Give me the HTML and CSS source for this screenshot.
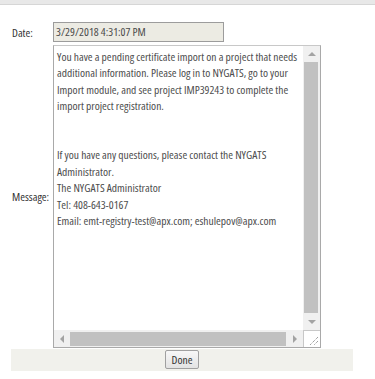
FILE: index.html
```html
<!DOCTYPE html>
<html lang="en">
<head>
    <meta charset="UTF-8">
    <meta name="viewport" content="width=device-width, initial-scale=1.0">
    <title>Import Message</title>
    <link rel="stylesheet" href="styles.css">
</head>
<body>
    <div class="topbar"></div>
    <div class="dialog">
        <div class="form-grid">
            <label class="field-label">Date:</label>
            <div class="date-box">3/29/2018 4:31:07 PM</div>

            <label class="field-label">Message:</label>
            <div class="message-box">
                <div class="message-text">You have a pending certificate import on a project that needs
additional information. Please log in to NYGATS, go to your
Import module, and see project IMP39243 to complete the
import project registration.


If you have any questions, please contact the NYGATS
Administrator.
The NYGATS Administrator
Tel: 408-643-0167
Email: emt-registry-test@apx.com; eshulepov@apx.com</div>
                <div class="vscroll">
                    <div class="arrow-btn"><span class="tri tri-up"></span></div>
                    <div class="vthumb"></div>
                    <div class="arrow-btn"><span class="tri tri-down"></span></div>
                </div>
                <div class="hscroll">
                    <div class="arrow-btn"><span class="tri tri-left"></span></div>
                    <div class="hthumb"></div>
                    <div class="arrow-btn"><span class="tri tri-right"></span></div>
                </div>
                <div class="corner">
                    <svg width="16" height="16" viewBox="0 0 16 16">
                        <path d="M14 6 L6 14 M14 10 L10 14" stroke="#777" stroke-width="1" stroke-dasharray="1 1"/>
                    </svg>
                </div>
            </div>
        </div>
        <div class="footer">
            <button type="button" class="done-btn">Done</button>
        </div>
    </div>
</body>
</html>
```
FILE: styles.css
```css
body {
    margin: 0;
    font-family: "Open Sans", sans-serif;
    font-stretch: 75%;
    font-size: 11.5px;
    color: #333;
    background: #fff;
}
.topbar {
    height: 4px;
    background: #e8e8e8;
    border-bottom: 1px solid #d6d6d6;
}
.dialog {
    width: 342px;
    margin: 17px 0 0 11px;
}
.form-grid {
    display: grid;
    grid-template-columns: 42px 268px;
    row-gap: 3px;
    align-items: center;
}
.field-label {
    padding-left: 1px;
    color: #333;
}
.date-box {
    width: 171px;
    height: 20px;
    box-sizing: border-box;
    border: 1px solid #9c9c9c;
    background: #ecebe3;
    color: #4a4a4a;
    line-height: 18px;
    padding-left: 2px;
}
.message-box {
    height: 303px;
    box-sizing: border-box;
    border: 1px solid #a9a9a9;
    border-top-color: #c8c8c8;
    display: grid;
    grid-template-columns: 1fr 17px;
    grid-template-rows: 1fr 17px;
    background: #fff;
}
.message-text {
    white-space: pre;
    overflow: hidden;
    line-height: 16.4px;
    padding: 3px 0 0 3px;
    color: #4d4d4d;
}
.vscroll {
    display: flex;
    flex-direction: column;
    background: #f0f0f0;
}
.hscroll {
    display: flex;
    background: #f0f0f0;
}
.arrow-btn {
    flex: 0 0 16px;
    height: 16px;
    display: flex;
    align-items: center;
    justify-content: center;
}
.hscroll .arrow-btn {
    height: 17px;
}
.vscroll .arrow-btn {
    width: 17px;
}
.vthumb {
    flex: 1;
    margin: 0 2px 1px 1px;
    background: #c1c1c1;
}
.hthumb {
    flex: 1;
    margin: 2px 1px 1px 0;
    background: #c1c1c1;
}
.tri {
    width: 0;
    height: 0;
}
.tri-up {
    border-left: 4px solid transparent;
    border-right: 4px solid transparent;
    border-bottom: 4px solid #a3a3a3;
}
.tri-down {
    border-left: 4px solid transparent;
    border-right: 4px solid transparent;
    border-top: 4px solid #a3a3a3;
}
.tri-left {
    border-top: 4px solid transparent;
    border-bottom: 4px solid transparent;
    border-right: 4px solid #a3a3a3;
}
.tri-right {
    border-top: 4px solid transparent;
    border-bottom: 4px solid transparent;
    border-left: 4px solid #a3a3a3;
}
.corner {
    background: #fff;
    border-left: 1px solid #c8c8c8;
    border-top: 1px solid #c8c8c8;
    box-sizing: border-box;
    display: flex;
    align-items: flex-end;
    justify-content: flex-end;
}
.corner svg {
    display: block;
}
.footer {
    margin-top: 1px;
    height: 22px;
    background: #f1f1ec;
    display: flex;
    justify-content: center;
    align-items: flex-start;
}
.done-btn {
    margin-top: 1px;
    width: 34px;
    height: 19px;
    padding: 0;
    font-family: inherit;
    font-stretch: 75%;
    font-size: 11.5px;
    color: #333;
    border: 1px solid #a0a0a0;
    border-radius: 2px;
    background: linear-gradient(#f7f7f7, #e3e3e3);
}
```
